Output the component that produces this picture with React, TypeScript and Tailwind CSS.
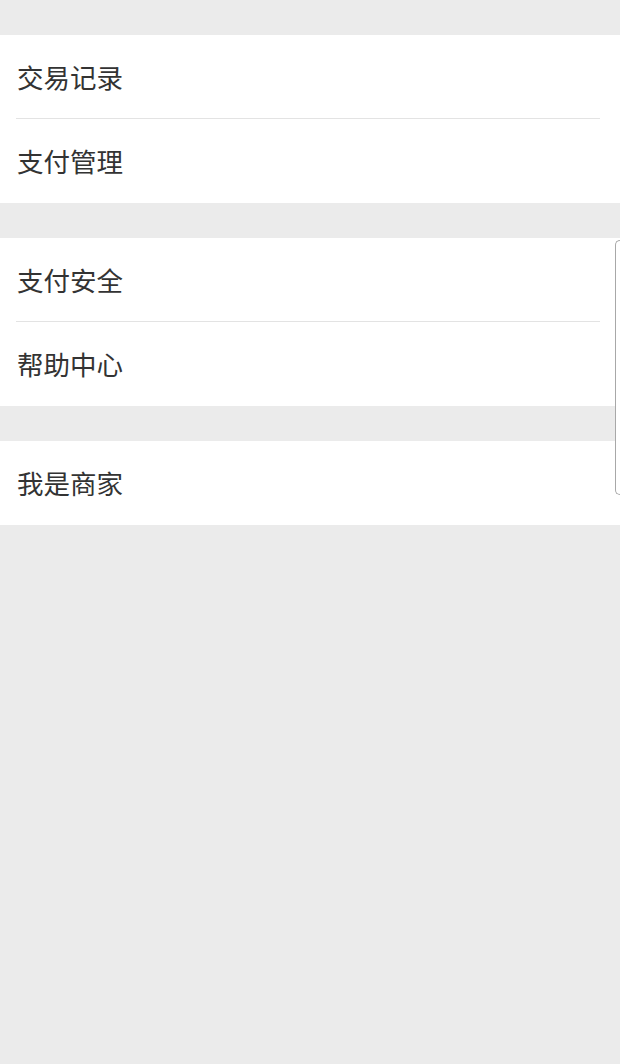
import React from "react";

const groups = [["交易记录", "支付管理"], ["支付安全", "帮助中心"], ["我是商家"]];

export default function App() {
  return (
    <div
      className="relative min-h-[1064px] w-[620px] bg-[#ebebeb] pt-[35px]"
      style={{ fontFamily: '"Noto Sans CJK SC", "Noto Sans", sans-serif' }}
    >
      <div className="flex flex-col gap-[35px]">
        {groups.map((g, gi) => (
          <div key={gi} className="bg-white">
            {g.map((item, i) => (
              <div key={item} className="relative flex h-[84px] items-center pl-[17px]">
                <span className="text-[26.5px] leading-none text-[#333333]">{item}</span>
                {i < g.length - 1 && (
                  <div className="absolute bottom-0 left-[16px] right-[20px] h-px bg-[#e3e3e3]" />
                )}
              </div>
            ))}
          </div>
        ))}
      </div>
      <div className="absolute right-0 top-[240px] h-[255px] w-[5px] rounded-l-[6px] border-y border-l border-[#a8a8a8] bg-white" />
    </div>
  );
}
